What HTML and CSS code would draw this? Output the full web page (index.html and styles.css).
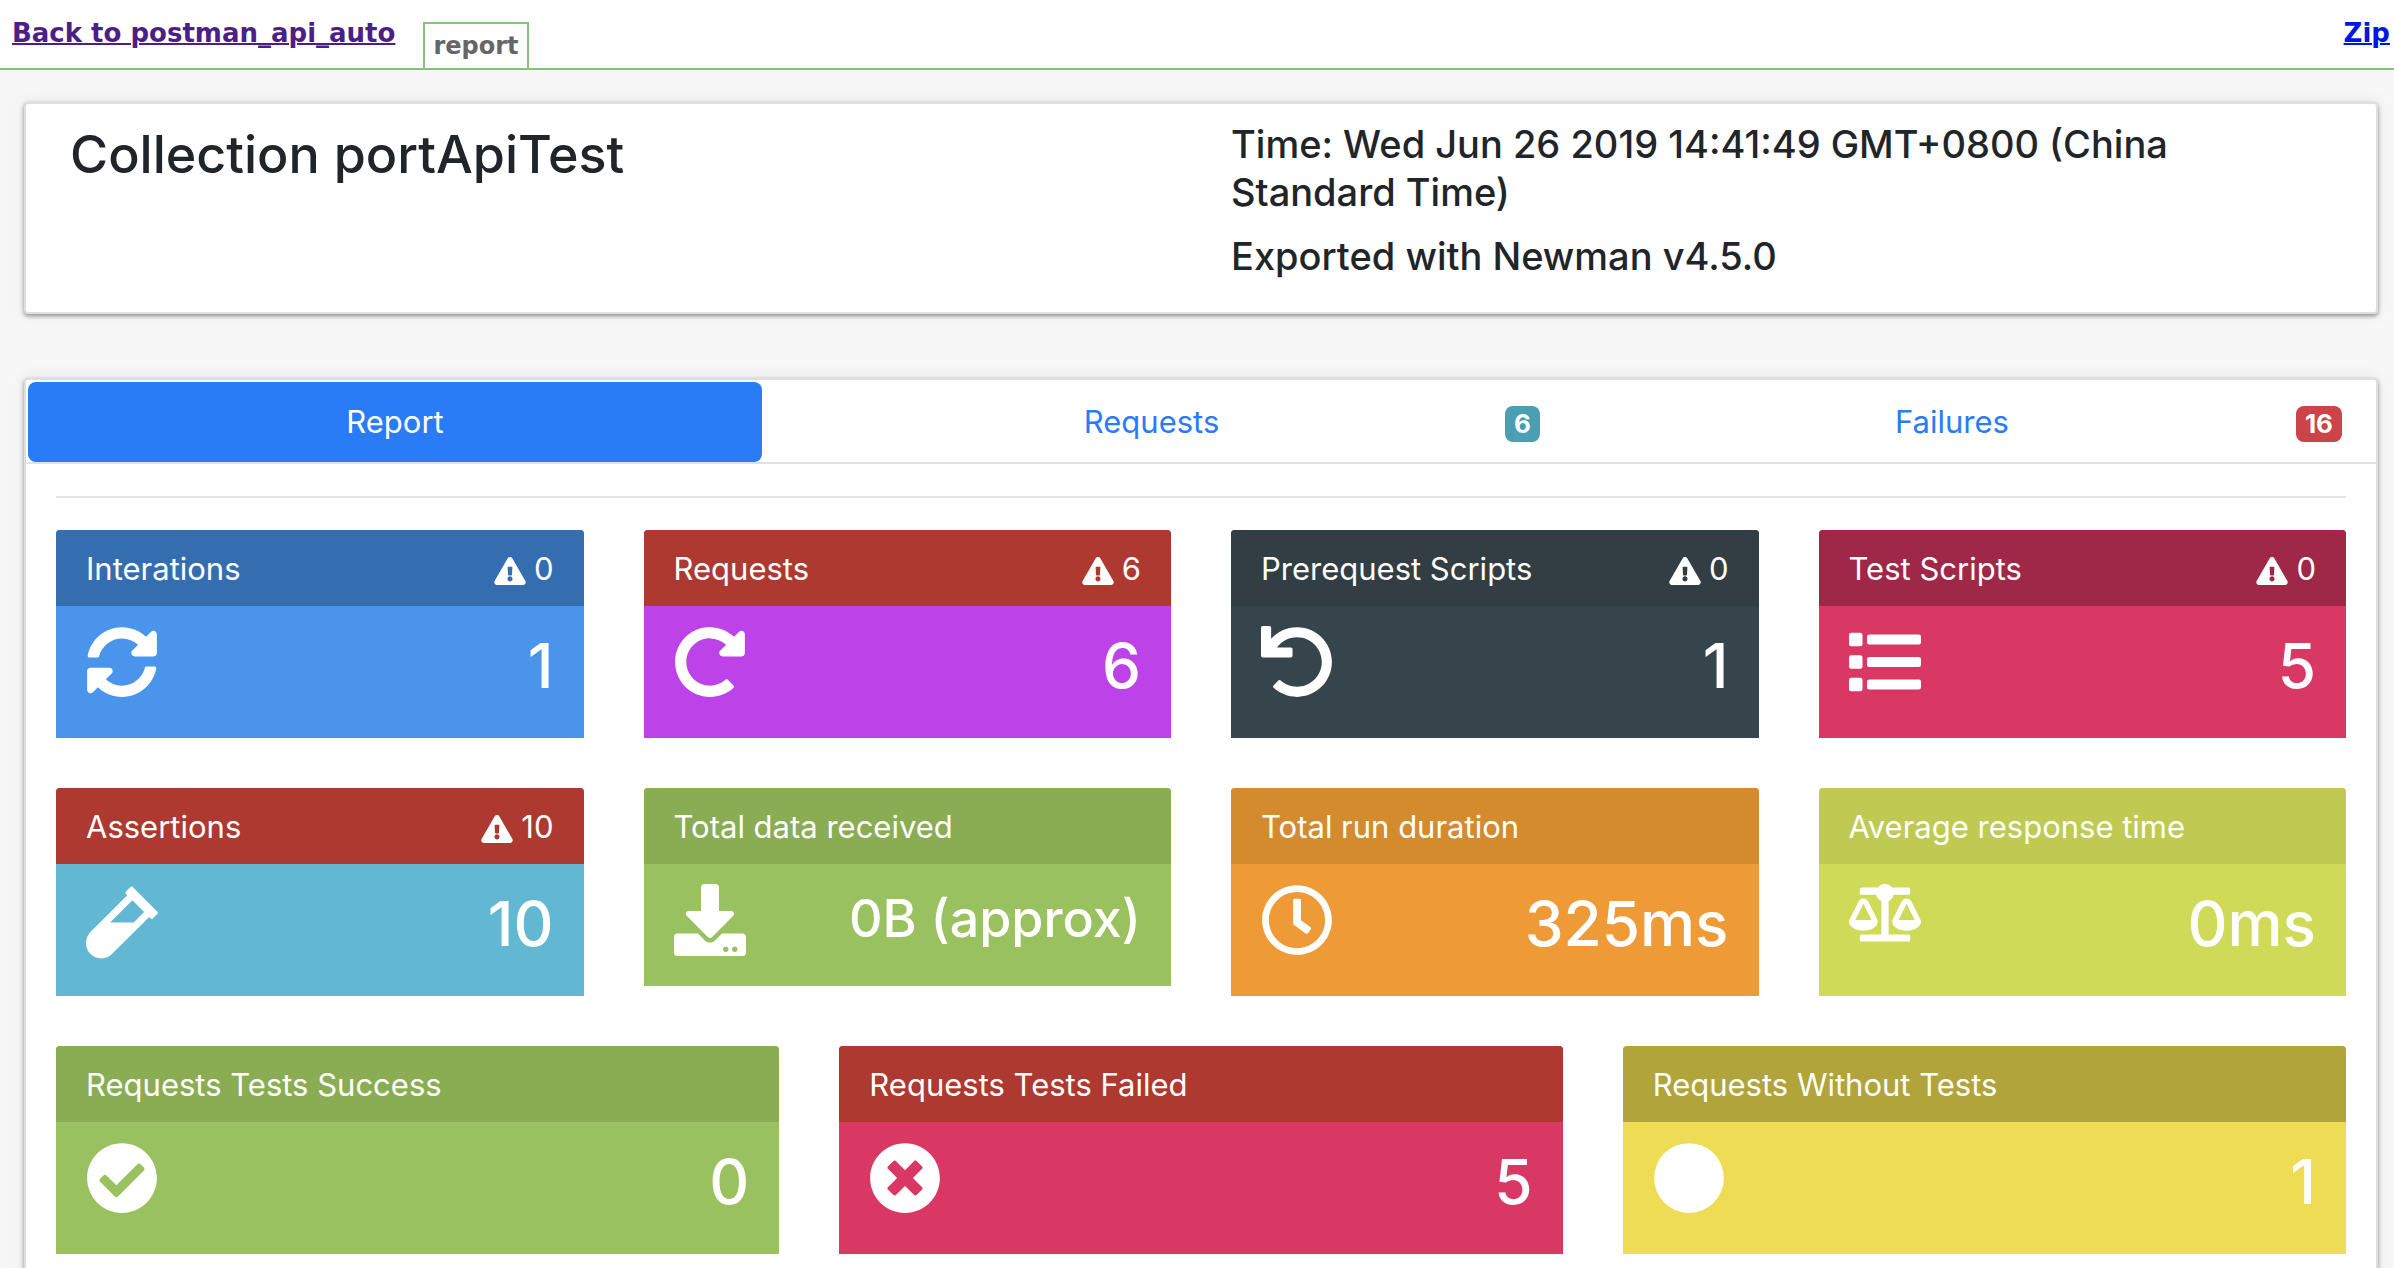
FILE: index.html
```html
<!DOCTYPE html>
<html lang="en">
<head>
<meta charset="utf-8">
<title>report</title>
<link rel="stylesheet" href="styles.css">
</head>
<body>
<svg class="sprite" aria-hidden="true">
  <symbol id="warn" viewBox="0 0 576 512"><path d="M569.517 440.013C587.975 472.007 564.806 512 527.94 512H48.054c-36.937 0-59.999-40.055-41.577-71.987L246.423 23.985c18.467-32.009 64.72-31.951 83.154 0l239.94 416.028zM288 354c-25.405 0-46 20.595-46 46s20.595 46 46 46 46-20.595 46-46-20.595-46-46-46zm-43.673-165.346l7.418 136c.347 6.364 5.609 11.346 11.982 11.346h48.546c6.373 0 11.635-4.982 11.982-11.346l7.418-136c.375-6.874-5.098-12.654-11.982-12.654h-63.383c-6.884 0-12.356 5.78-11.981 12.654z"/></symbol>
</svg>

<header class="topbar">
  <a class="back" href="#back">Back to postman_api_auto</a>
  <span class="file-tab">report</span>
  <a class="zip" href="#zip">Zip</a>
</header>

<main class="page">
  <section class="panel summary">
    <h1 class="title">Collection portApiTest</h1>
    <div class="meta">
      <h2 class="meta-line">Time: Wed Jun 26 2019 14:41:49 GMT+0800 (China Standard Time)</h2>
      <h2 class="meta-line">Exported with Newman v4.5.0</h2>
    </div>
  </section>

  <section class="panel">
    <nav class="tabs">
      <a class="tab active" href="#report"><span class="tab-text">Report</span></a>
      <a class="tab" href="#requests"><span class="tab-text">Requests</span><span class="badge info">6</span></a>
      <a class="tab" href="#failures"><span class="tab-text">Failures</span><span class="badge danger">16</span></a>
    </nav>

    <div class="report" id="report">
      <hr class="rule">
      <div class="cards four">
        <article class="card blue">
          <div class="card-head"><span>Interations</span><span class="alert"><svg class="warn"><use href="#warn"/></svg>0</span></div>
          <div class="card-body">
            <svg class="icon" viewBox="0 0 512 512"><path d="M370.72 133.28C339.458 104.008 298.888 87.962 255.848 88c-77.458.068-144.328 53.178-162.791 126.85-1.344 5.363-6.122 9.15-11.651 9.15H24.103c-7.498 0-13.194-6.807-11.807-14.176C33.933 94.924 134.813 8 256 8c66.448 0 126.791 26.136 171.315 68.685L463.03 40.97C478.149 25.851 504 36.559 504 57.941V192c0 13.255-10.745 24-24 24H345.941c-21.382 0-32.09-25.851-16.971-40.971l41.75-41.749zM32 296h134.059c21.382 0 32.09 25.851 16.971 40.971l-41.75 41.75c31.262 29.273 71.835 45.319 114.876 45.28 77.418-.07 144.315-53.144 162.787-126.849 1.344-5.363 6.122-9.15 11.651-9.15h57.304c7.498 0 13.194 6.807 11.807 14.176C478.067 417.076 377.187 504 256 504c-66.448 0-126.791-26.136-171.315-68.685L48.97 471.03C33.851 486.149 8 475.441 8 454.059V320c0-13.255 10.745-24 24-24z"/></svg>
            <span class="count">1</span>
          </div>
        </article>
        <article class="card purple">
          <div class="card-head"><span>Requests</span><span class="alert"><svg class="warn"><use href="#warn"/></svg>6</span></div>
          <div class="card-body">
            <svg class="icon" viewBox="0 0 512 512"><path d="M256.455 8c66.269.119 126.437 26.233 170.859 68.685l35.715-35.715C478.149 25.851 504 36.559 504 57.941V192c0 13.255-10.745 24-24 24H345.941c-21.382 0-32.09-25.851-16.971-40.971l41.75-41.75c-30.864-28.899-70.801-44.907-113.23-45.273-92.398-.798-170.283 73.977-169.484 169.442C88.764 348.009 162.184 424 256 424c41.127 0 79.997-14.678 110.629-41.556 4.743-4.161 11.906-3.908 16.368.553l39.662 39.662c4.872 4.872 4.631 12.815-.482 17.433C378.202 479.813 319.926 504 256 504 119.034 504 8.001 392.967 8 256.002 7.999 119.193 119.646 7.755 256.455 8z"/></svg>
            <span class="count">6</span>
          </div>
        </article>
        <article class="card slate">
          <div class="card-head"><span>Prerequest Scripts</span><span class="alert"><svg class="warn"><use href="#warn"/></svg>0</span></div>
          <div class="card-body">
            <svg class="icon" viewBox="0 0 512 512"><path d="M212.333 224.333H12c-6.627 0-12-5.373-12-12V12C0 5.373 5.373 0 12 0h48c6.627 0 12 5.373 12 12v78.112C117.773 39.279 184.26 7.47 258.175 8.007c136.906.994 246.448 111.623 246.157 248.532C504.041 393.258 393.12 504 256.333 504c-64.089 0-122.496-24.313-166.51-64.215-5.099-4.622-5.334-12.554-.467-17.42l33.967-33.967c4.474-4.474 11.662-4.717 16.401-.525C170.76 415.336 211.58 432 256.333 432c97.268 0 176-78.716 176-176 0-97.267-78.716-176-176-176-58.496 0-110.28 28.476-142.274 72.333h98.274c6.627 0 12 5.373 12 12v48c0 6.627-5.373 12-12 12z"/></svg>
            <span class="count">1</span>
          </div>
        </article>
        <article class="card pink">
          <div class="card-head"><span>Test Scripts</span><span class="alert"><svg class="warn"><use href="#warn"/></svg>0</span></div>
          <div class="card-body">
            <svg class="icon" viewBox="0 0 512 512"><rect y="48" width="96" height="96" rx="16"/><rect y="208" width="96" height="96" rx="16"/><rect y="368" width="96" height="96" rx="16"/><rect x="128" y="60" width="384" height="72" rx="16"/><rect x="128" y="220" width="384" height="72" rx="16"/><rect x="128" y="380" width="384" height="72" rx="16"/></svg>
            <span class="count">5</span>
          </div>
        </article>

        <article class="card cyan">
          <div class="card-head"><span>Assertions</span><span class="alert"><svg class="warn"><use href="#warn"/></svg>10</span></div>
          <div class="card-body">
            <svg class="icon" viewBox="0 0 480 512"><path d="M477.7 186.1L309.5 18.3c-3.1-3.1-8.2-3.1-11.3 0l-34 33.9c-3.1 3.1-3.1 8.2 0 11.3l11.2 11.1L33 316.5c-38.8 38.7-45.1 102-9.4 143.5 20.6 24 49.5 36 78.4 35.9 26.4 0 52.8-10 72.8-30.1l246.3-245.7 11.2 11.1c3.1 3.1 8.2 3.1 11.3 0l34-33.9c3.1-3 3.1-8.1.1-11.2zM318 256H161l148-147.7 78.5 78.3L318 256z"/></svg>
            <span class="count">10</span>
          </div>
        </article>
        <article class="card green">
          <div class="card-head"><span>Total data received</span></div>
          <div class="card-body">
            <svg class="icon" viewBox="0 0 512 512"><path d="M216 0h80c13.3 0 24 10.7 24 24v168h87.7c17.8 0 26.7 21.5 14.1 34.1L269.7 378.3c-7.5 7.5-19.8 7.5-27.3 0L90.1 226.1c-12.6-12.6-3.7-34.1 14.1-34.1H192V24c0-13.3 10.7-24 24-24zm296 376v112c0 13.3-10.7 24-24 24H24c-13.3 0-24-10.7-24-24V376c0-13.3 10.7-24 24-24h146.7l49 49c20.1 20.1 52.5 20.1 72.6 0l49-49H488c13.3 0 24 10.7 24 24zm-124 88c0-11-9-20-20-20s-20 9-20 20 9 20 20 20 20-9 20-20zm64 0c0-11-9-20-20-20s-20 9-20 20 9 20 20 20 20-9 20-20z"/></svg>
            <span class="count small">0B (approx)</span>
          </div>
        </article>
        <article class="card orange">
          <div class="card-head"><span>Total run duration</span></div>
          <div class="card-body">
            <svg class="icon" viewBox="0 0 512 512"><path d="M256 8C119 8 8 119 8 256s111 248 248 248 248-111 248-248S393 8 256 8zm0 448c-110.5 0-200-89.5-200-200S145.5 56 256 56s200 89.5 200 200-89.5 200-200 200zm61.8-104.4l-84.9-61.7c-3.1-2.3-4.9-5.9-4.9-9.7V116c0-6.6 5.4-12 12-12h32c6.6 0 12 5.4 12 12v141.7l66.8 48.6c5.4 3.9 6.5 11.4 2.6 16.8L334.6 349c-3.9 5.3-11.4 6.5-16.8 2.6z"/></svg>
            <span class="count">325ms</span>
          </div>
        </article>
        <article class="card lime">
          <div class="card-head"><span>Average response time</span></div>
          <div class="card-body">
            <svg class="icon" viewBox="0 0 640 512"><path d="M256 336h-.02c0-16.18 1.34-8.73-85.05-181.51-17.65-35.29-68.19-35.36-85.87 0C-2.06 328.75.02 320.33.02 336H0c0 44.18 57.31 80 128 80s128-35.82 128-80zM128 176l72 144H56l72-144zm511.98 160c0-16.18 1.34-8.73-85.05-181.51-17.65-35.29-68.19-35.36-85.87 0-87.12 174.26-85.04 165.84-85.04 181.51H384c0 44.18 57.31 80 128 80s128-35.82 128-80h-.02zM440 320l72-144 72 144H440zm88 128H352V153.25c23.51-10.29 41.16-31.48 46.39-57.25H528c8.84 0 16-7.16 16-16V48c0-8.84-7.16-16-16-16H383.64C369.04 12.68 346.09 0 320 0s-49.04 12.68-63.64 32H112c-8.84 0-16 7.16-16 16v32c0 8.84 7.16 16 16 16h129.61c5.23 25.76 22.87 46.96 46.39 57.25V448H112c-8.84 0-16 7.16-16 16v32c0 8.84 7.16 16 16 16h416c8.84 0 16-7.16 16-16v-32c0-8.84-7.16-16-16-16z"/></svg>
            <span class="count">0ms</span>
          </div>
        </article>
      </div>

      <div class="cards three">
        <article class="card green">
          <div class="card-head"><span>Requests Tests Success</span></div>
          <div class="card-body">
            <svg class="icon" viewBox="0 0 512 512"><path d="M504 256c0 136.967-111.033 248-248 248S8 392.967 8 256 119.033 8 256 8s248 111.033 248 248zM227.314 387.314l184-184c6.248-6.248 6.248-16.379 0-22.627l-22.627-22.627c-6.248-6.249-16.379-6.249-22.628 0L216 308.118l-70.059-70.059c-6.248-6.248-16.379-6.248-22.628 0l-22.627 22.627c-6.248 6.248-6.248 16.379 0 22.627l104 104c6.249 6.249 16.379 6.249 22.628.001z"/></svg>
            <span class="count">0</span>
          </div>
        </article>
        <article class="card failed">
          <div class="card-head"><span>Requests Tests Failed</span></div>
          <div class="card-body">
            <svg class="icon" viewBox="0 0 512 512"><path d="M256 8C119 8 8 119 8 256s111 248 248 248 248-111 248-248S393 8 256 8zm121.6 313.1c4.7 4.7 4.7 12.3 0 17L338 377.6c-4.7 4.7-12.3 4.7-17 0L256 312l-65.1 65.6c-4.7 4.7-12.3 4.7-17 0L134.4 338c-4.7-4.7-4.7-12.3 0-17l65.6-65-65.6-65.1c-4.7-4.7-4.7-12.3 0-17l39.6-39.6c4.7-4.7 12.3-4.7 17 0l65 65.7 65.1-65.6c4.7-4.7 12.3-4.7 17 0l39.6 39.6c4.7 4.7 4.7 12.3 0 17L312 256l65.6 65.1z"/></svg>
            <span class="count">5</span>
          </div>
        </article>
        <article class="card yellow">
          <div class="card-head"><span>Requests Without Tests</span></div>
          <div class="card-body">
            <svg class="icon" viewBox="0 0 512 512"><circle cx="256" cy="256" r="248"/></svg>
            <span class="count">1</span>
          </div>
        </article>
      </div>
    </div>
  </section>
</main>
</body>
</html>
```
FILE: styles.css
```css
* {
  box-sizing: border-box;
}

body {
  margin: 0;
  background: #f7f7f7;
  color: #212529;
  font-family: Inter, "Liberation Sans", sans-serif;
  font-size: 31px;
  line-height: 48px;
}

.sprite {
  display: none;
}

a {
  text-decoration: none;
}

.topbar {
  display: flex;
  align-items: flex-end;
  height: 70px;
  padding: 0 4px 0 12px;
  background: #fff;
  border-bottom: 2px solid #82c578;
  font-family: "DejaVu Sans", sans-serif;
  font-weight: 700;
  font-size: 26px;
  line-height: 32px;
}

.back,
.zip {
  padding-bottom: 19px;
  text-decoration: underline;
  text-decoration-thickness: 2px;
}

.back {
  color: #4b1f86;
}

.zip {
  margin-left: auto;
  color: #0016e5;
}

.file-tab {
  margin-left: 28px;
  padding: 6px 8px;
  border: 2px solid #82c578;
  border-bottom: 0;
  background: #fff;
  color: #666;
  font-size: 24px;
}

.page {
  padding: 32px 16px 0 24px;
}

.panel {
  margin-bottom: 64px;
  background: #fff;
  border: 2px solid #dedede;
  border-radius: 4px;
  box-shadow: 0 2px 4px rgba(0, 0, 0, 0.4), 0 0 16px rgba(0, 0, 0, 0.08);
}

.summary {
  display: grid;
  grid-template-columns: 1fr 1fr;
  gap: 60px;
  padding: 16px 44px;
}

.title,
.meta-line {
  margin: 0 0 16px;
  font-weight: 500;
}

.title {
  font-size: 52px;
  line-height: 70px;
}

.meta-line {
  font-size: 38px;
  line-height: 48px;
}

.tabs {
  display: grid;
  grid-template-columns: 738fr 810fr 802fr;
  border-bottom: 2px solid #dee2e6;
}

.tab {
  display: flex;
  align-items: center;
  height: 82px;
  padding: 2px 34px 0;
  color: #297bf6;
}

.tab.active {
  margin: 2px 2px 0;
  height: 80px;
  padding-top: 0;
  background: #297bf6;
  border-radius: 8px;
  color: #fff;
}

.tab-text {
  flex: 1;
  text-align: center;
}

.badge {
  margin-top: 4px;
  padding: 0 9px;
  border-radius: 8px;
  color: #fff;
  font-size: 26px;
  font-weight: 700;
  line-height: 36px;
}

.info {
  background: #4a9fb3;
}

.danger {
  background: #ca444a;
}

.report {
  padding: 32px 30px 0;
}

.rule {
  margin: 0 0 32px;
  border: 0;
  border-top: 2px solid #e5e5e5;
}

.cards {
  display: grid;
  gap: 50px 60px;
  align-items: start;
  margin-bottom: 50px;
}

.four {
  grid-template-columns: repeat(4, 1fr);
}

.three {
  grid-template-columns: repeat(3, 1fr);
}

.card {
  overflow: hidden;
  border-radius: 4px 4px 0 0;
  color: #fff;
}

.card-head {
  display: flex;
  justify-content: space-between;
  padding: 15px 30px 13px;
}

.alert {
  display: flex;
  align-items: center;
  gap: 8px;
}

.warn {
  width: 32px;
  height: 28px;
  margin-top: 4px;
  fill: #fff;
}

.card-body {
  display: flex;
  justify-content: space-between;
  align-items: flex-start;
  padding: 20px 30px;
}

.icon {
  width: 72px;
  fill: #fff;
}

.count {
  margin: 2px 0 14px;
  font-size: 62px;
  font-weight: 500;
  line-height: 76px;
}

.count.small {
  font-size: 52px;
  line-height: 66px;
}

.blue { background: #4a95eb; }
.blue .card-head { background: #356eb0; }
.purple { background: #bd43e8; }
.purple .card-head,
.cyan .card-head,
.failed .card-head { background: #ad3930; }
.slate { background: #36444b; }
.slate .card-head { background: #323e43; }
.pink,
.failed { background: #d93865; }
.pink .card-head { background: #9f2747; }
.cyan { background: #62b8d2; }
.green { background: #99c15f; }
.green .card-head { background: #8aad54; }
.orange { background: #ed9a37; }
.orange .card-head { background: #d48b2e; }
.lime { background: #d0da59; }
.lime .card-head { background: #c0ca53; }
.yellow { background: #eddc54; }
.yellow .card-head { background: #b0a43b; }
```
